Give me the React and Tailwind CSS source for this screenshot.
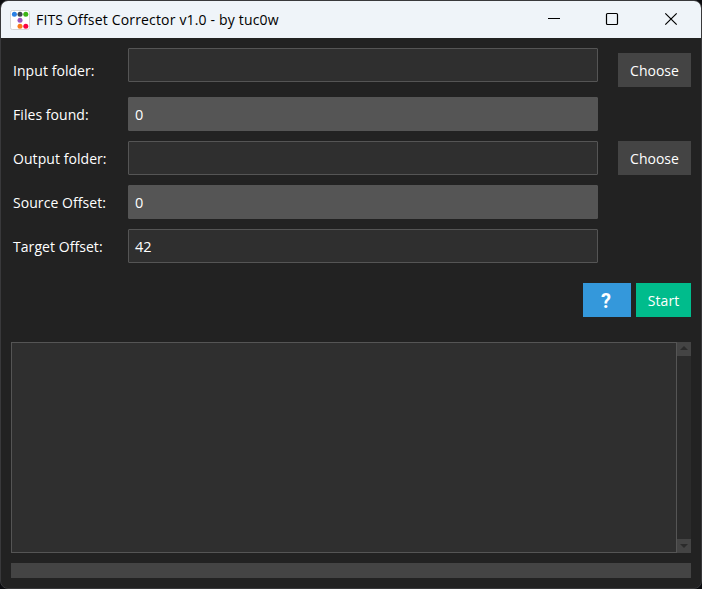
import React from "react";

const font = "font-['Open_Sans','Noto_Sans',sans-serif]";

function Field({ value = "", readOnly = false }) {
  return (
    <div
      className={`flex h-[34px] w-[470px] shrink-0 items-center rounded-[1px] border border-[#555555] pl-1.5 pt-[2px] text-[14.5px] leading-none ${
        readOnly ? "bg-[#555555]" : "bg-[#2f2f2f]"
      }`}
    >
      {value}
    </div>
  );
}

function Row({ label, children, action }) {
  return (
    <div className="flex h-[34px] items-center">
      <div className="w-[117px] shrink-0 whitespace-nowrap pl-0.5 pt-[2px] text-[14px] leading-none tracking-[0.06px]">
        {label}
      </div>
      {children}
      {action && <ChooseButton />}
    </div>
  );
}

function ChooseButton() {
  return (
    <button className="ml-5 h-[34px] w-[73px] shrink-0 bg-[#444444] pt-[2px] text-center text-[14px] leading-none">
      Choose
    </button>
  );
}

function AppIcon() {
  return (
    <svg width="20" height="20" viewBox="0 0 20 20">
      <rect x="0.5" y="0.5" width="19" height="19" rx="1.8" fill="#fff" stroke="#d5d5d5" />
      <circle cx="4.4" cy="4.3" r="2.5" fill="#2a80e4" />
      <circle cx="10" cy="4.3" r="2.5" fill="#3f474d" />
      <circle cx="15.8" cy="4.3" r="2.5" fill="#3db516" />
      <circle cx="10" cy="10.3" r="2.5" fill="#9b55bd" />
      <circle cx="10" cy="16.2" r="2.5" fill="#fb7a18" />
      <circle cx="15.8" cy="16.2" r="2.5" fill="#fb0340" />
    </svg>
  );
}

export default function App() {
  return (
    <div className={`h-[589px] w-[702px] overflow-hidden bg-[#0b0c0f] text-white ${font}`}>
      <div className="flex h-full w-full flex-col overflow-hidden rounded-[8px] border border-[#39393b] bg-[#222222]">
        <header className="flex h-[37px] shrink-0 items-center bg-[#eff4f9] pl-[9px] text-black">
          <AppIcon />
          <span className="ml-[6px] whitespace-nowrap text-[14px] leading-none tracking-[0.17px]">
            FITS Offset Corrector v1.0 - by tuc0w
          </span>
          <div className="ml-auto flex h-full items-center">
            <svg width="154" height="37" viewBox="0 0 154 37" fill="none" stroke="#000">
              <path d="M1 17.5h12" />
              <rect x="59.5" y="12.5" width="11" height="11" rx="1" strokeWidth="1.2" />
              <path d="M118.3 12.3l11.4 11.4M129.7 12.3l-11.4 11.4" strokeWidth="1.2" />
            </svg>
          </div>
        </header>

        <main className="flex flex-1 flex-col px-[10px] pt-[10px]">
          <div className="flex h-[39px]">
            <div className="flex h-[44px] w-[117px] shrink-0 items-center whitespace-nowrap pl-0.5 pt-[2px] text-[14px] leading-none tracking-[0.06px]">
              Input folder:
            </div>
            <Field />
            <div className="pt-[5px]">
              <ChooseButton />
            </div>
          </div>
          <div className="mt-[10px] flex flex-col gap-[10px]">
            <Row label="Files found:">
              <Field value="0" readOnly />
            </Row>
            <Row label="Output folder:" action>
              <Field />
            </Row>
            <Row label="Source Offset:">
              <Field value="0" readOnly />
            </Row>
            <Row label="Target Offset:">
              <Field value="42" />
            </Row>
          </div>

          <div className="mt-5 flex h-[34px] justify-end gap-[5px]">
            <button className="w-[48px] bg-[#3498db] pr-[2px] pt-[2px] font-['Roboto',sans-serif] text-[20px] font-bold leading-none">
              ?
            </button>
            <button className="w-[55px] bg-[#00bc8c] pt-[2px] text-[14px] leading-none tracking-[0.1px]">Start</button>
          </div>

          <div className="mt-[25px] flex h-[211px]">
            <div className="flex-1 border border-[#555555] bg-[#2f2f2f]" />
            <div className="flex w-[14px] flex-col justify-between bg-[#2b2b2b]">
              <div className="flex h-[14px] items-start justify-center bg-[#444444] pt-[4px]">
                <svg width="8" height="4" viewBox="0 0 8 4">
                  <path d="M0 4L4 0L8 4Z" fill="#2b2b2b" />
                </svg>
              </div>
              <div className="flex h-[14px] items-center justify-center bg-[#444444]">
                <svg width="8" height="4" viewBox="0 0 8 4">
                  <path d="M0 0L4 4L8 0Z" fill="#2b2b2b" />
                </svg>
              </div>
            </div>
          </div>

          <div className="mt-[10px] h-[15px] bg-[#444444]" />
        </main>
      </div>
    </div>
  );
}
